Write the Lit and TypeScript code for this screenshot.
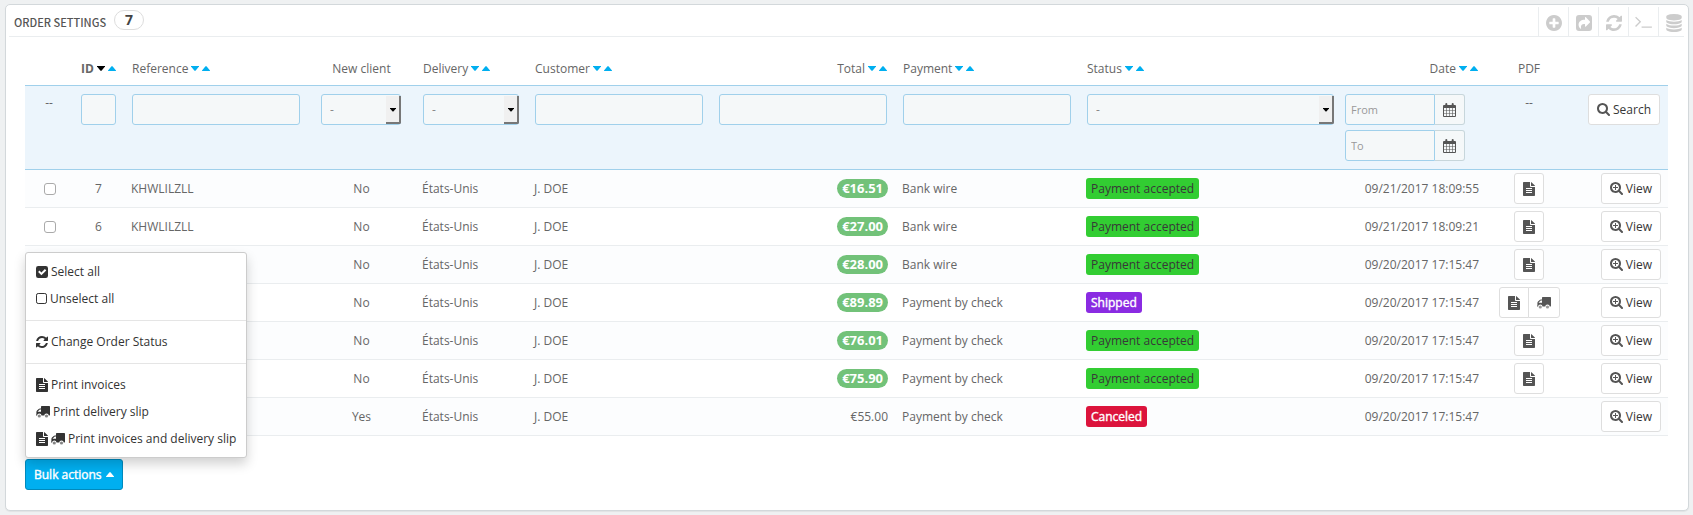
import { LitElement, html, svg, css, nothing } from "lit";
import { customElement, property } from "lit/decorators.js";

const SEARCH =
  "M1216 832q0-185-131.5-316.5t-316.5-131.5-316.5 131.5-131.5 316.5 131.5 316.5 316.5 131.5 316.5-131.5 131.5-316.5zm512 832q0 52-38 90t-90 38q-54 0-90-38l-343-342q-179 124-399 124-143 0-273.5-55.5t-225-150-150-225-55.5-273.5 55.5-273.5 150-225 225-150 273.5-55.5 273.5 55.5 225 150 150 225 55.5 273.5q0 220-124 399l343 343q37 37 37 90z";
const PLUS =
  "M1088 800v64q0 13-9.5 22.5t-22.5 9.5h-224v224q0 13-9.5 22.5t-22.5 9.5h-64q-13 0-22.5-9.5t-9.5-22.5v-224h-224q-13 0-22.5-9.5t-9.5-22.5v-64q0-13 9.5-22.5t22.5-9.5h224v-224q0-13 9.5-22.5t22.5-9.5h64q13 0 22.5 9.5t9.5 22.5v224h224q13 0 22.5 9.5t9.5 22.5z";
const REFRESH =
  "M1639 1056q0 5-1 7-64 268-268 434.5t-478 166.500q-146 0-282.500-55t-243.500-157l-129 129q-19 19-45 19t-45-19-19-45v-448q0-26 19-45t45-19h448q26 0 45 19t19 45-19 45l-137 137q71 66 161 102t187 36q134 0 250-65t186-179q11-17 53-117 8-23 30-23h192q13 0 22.500 9.500t9.500 22.500zm25-800v448q0 26-19 45t-45 19h-448q-26 0-45-19t-19-45 19-45l138-138q-148-137-349-137-134 0-250 65t-186 179q-11 17-53 117-8 23-30 23h-199q-13 0-22.500-9.500t-9.500-22.500v-7q65-268 270-434.500t480-166.500q146 0 284 55.500t245 156.500l130-129q19-19 45-19t45 19 19 45z";

interface Glyph {
  box: string;
  w: number;
  h: number;
  body: unknown;
}

const GLYPHS: Record<string, Glyph> = {
  add: {
    box: "128 128 1536 1536", w: 16, h: 16,
    body: svg`<path d="M1344 960v-128q0-26-19-45t-45-19h-256v-256q0-26-19-45t-45-19h-128q-26 0-45 19t-19 45v256h-256q-26 0-45 19t-19 45v128q0 26 19 45t45 19h256v256q0 26 19 45t45 19h128q26 0 45-19t19-45v-256h256q26 0 45-19t19-45zm320-64q0 209-103 385.5t-279.5 279.5-385.5 103-385.5-103-279.5-279.5-103-385.5 103-385.5 279.5-279.5 385.5-103 385.5 103 279.5 279.5 103 385.5z"/>`,
  },
  share: {
    box: "0 0 16 16", w: 16, h: 16,
    body: svg`<path fill-rule="evenodd" d="M3 0h10a3 3 0 0 1 3 3v10a3 3 0 0 1-3 3H3a3 3 0 0 1-3-3V3a3 3 0 0 1 3-3zM9 2.6v2.2C4.800 4.800 2.600 6.800 2.600 9.800c0 1.700.8 3 2 3.900.3.200.6 0 .5-.4C4.500 10.300 5.700 8.900 9 8.900v2.300c0 .5.500.7.900.4l4-4.200a.7.7 0 0 0 0-.9l-4-4.200C9.500 1.900 9 2.100 9 2.600z"/>`,
  },
  refresh: { box: "128 128 1536 1536", w: 16, h: 16, body: svg`<path d=${REFRESH} />` },
  sync: { box: "128 128 1536 1536", w: 12, h: 12, body: svg`<path d=${REFRESH} />` },
  terminal: {
    box: "64 384 1664 1280", w: 17, h: 13,
    body: svg`<path d="M649 983l-466 466q-10 10-23 10t-23-10l-50-50q-10-10-10-23t10-23l393-393-393-393q-10-10-10-23t10-23l50-50q10-10 23-10t23 10l466 466q10 10 10 23t-10 23zm1079 457v64q0 14-9 23t-23 9h-960q-14 0-23-9t-9-23v-64q0-14 9-23t23-9h960q14 0 23 9t9 23z"/>`,
  },
  database: {
    box: "128 0 1536 1792", w: 16, h: 18,
    body: svg`<path d="M896 768q237 0 443-43t325-127v170q0 69-103 128t-280 93.500-385 34.500-385-34.500-280-93.500-103-128v-170q119 84 325 127t443 43zm0 768q237 0 443-43t325-127v170q0 69-103 128t-280 93.500-385 34.500-385-34.500-280-93.500-103-128v-170q119 84 325 127t443 43zm0-384q237 0 443-43t325-127v170q0 69-103 128t-280 93.500-385 34.500-385-34.500-280-93.500-103-128v-170q119 84 325 127t443 43zm0-1152q208 0 385 34.500t280 93.500 103 128v128q0 69-103 128t-280 93.500-385 34.500-385-34.500-280-93.500-103-128v-128q0-69 103-128t280-93.500 385-34.500z"/>`,
  },
  search: { box: "64 128 1664 1664", w: 13, h: 13, body: svg`<path d=${SEARCH} />` },
  zoom: { box: "64 128 1664 1664", w: 13, h: 13, body: svg`<path d=${SEARCH} /><path d=${PLUS} />` },
  calendar: {
    box: "0 0 13 14", w: 13, h: 14,
    body: svg`<path fill-rule="evenodd" d="M1 2h1.300V1a1 1 0 0 1 2 0v1h4.400V1a1 1 0 0 1 2 0v1H12a1 1 0 0 1 1 1v10a1 1 0 0 1-1 1H1a1 1 0 0 1-1-1V3a1 1 0 0 1 1-1zM1 5v2h2.200V5zm2.800 0v2h2.400V5zm3 0v2h2.400V5zm3 0v2H12V5zM1 7.600v2.300h2.200V7.600zm2.800 0v2.300h2.400V7.600zm3 0v2.300h2.400V7.600zm3 0v2.300H12V7.600zM1 10.500V13h2.200v-2.500zm2.800 0V13h2.400v-2.500zm3 0V13h2.400v-2.500zm3 0V13H12v-2.500z"/>`,
  },
  file: {
    box: "0 0 12 14", w: 12, h: 14,
    body: svg`<path fill-rule="evenodd" d="M.7 0H7v4.300c0 .4.300.7.700.7H12v8.300a.7.700 0 0 1-.7.7H.7a.7.700 0 0 1-.7-.7V.7C0 .3.300 0 .7 0zM3 6v1h6V6zm0 2v1h6V8zm0 2v1h6v-1z"/><path d="M8 0c.3.100.5.200.7.400l2.900 2.900c.2.200.300.400.400.700H8z"/>`,
  },
  truck: {
    box: "0 0 14 12", w: 14, h: 12,
    body: svg`<path fill-rule="evenodd" d="M5.700 0h7.600c.4 0 .7.300.7.700v8c0 .6-.4.900-1 .9h-.3a2.200 2.200 0 0 0-4.400 0H5.500a2.200 2.200 0 0 0-4.400 0H.6c-.4 0-.6-.2-.6-.6 0-.3.100-.4.400-.5V6c0-.6.200-1 .6-1.400l1.700-1.700c.3-.3.700-.500 1.200-.5H5V.7c0-.4.300-.7.700-.7zM1.600 5.700H5V3.500H3.900c-.2 0-.3.100-.4.200L1.700 5.400z"/><circle cx="3.300" cy="10" r="1.600" opacity=".6"/><circle cx="10.500" cy="10" r="1.600" opacity=".6"/>`,
  },
  checked: {
    box: "0 0 12 12", w: 12, h: 12,
    body: svg`<path fill-rule="evenodd" d="M2.200 0h7.600A2.200 2.200 0 0 1 12 2.200v7.600A2.200 2.200 0 0 1 9.800 12H2.200A2.200 2.200 0 0 1 0 9.800V2.200A2.200 2.200 0 0 1 2.200 0zM5.400 9.300l4.900-4.900-1.400-1.400-3.500 3.500-1.900-1.900-1.400 1.400z"/>`,
  },
  unchecked: {
    box: "0 0 11 12", w: 11, h: 12,
    body: svg`<rect x=".5" y=".5" width="10" height="10" rx="1.700" fill="none" stroke="currentColor"/>`,
  },
  down: { box: "0 0 8 5", w: 8, h: 5, body: svg`<path d="M0 0h8v.6L4.500 4.700h-1L0 .6z"/>` },
  drop: { box: "0 0 6 4", w: 6, h: 4, body: svg`<path d="M0 0h6v.5L3.400 3.500h-.8L0 .5z"/>` },
  up: { box: "0 0 8 5", w: 8, h: 5, body: svg`<path d="M0 5h8v-.6L4.500.3h-1L0 4.400z"/>` },
};

@customElement("ui-icon")
export class UiIcon extends LitElement {
  @property() name = "";

  static styles = css`
    :host { display: inline-flex; flex: none; }
    svg { display: block; fill: currentColor; }
  `;

  render() {
    const g = GLYPHS[this.name];
    return g
      ? html`<svg viewBox=${g.box} width=${g.w} height=${g.h} aria-hidden="true">${g.body}</svg>`
      : nothing;
  }
}

interface Order {
  id?: number;
  ref?: string;
  fresh: string;
  total: string;
  paid: boolean;
  payment: string;
  status: "accepted" | "shipped" | "canceled";
  date: string;
  docs: string[];
}

const STATUS = { accepted: "Payment accepted", shipped: "Shipped", canceled: "Canceled" };

const ORDERS: Order[] = [
  { id: 7, ref: "KHWLILZLL", fresh: "No", total: "€16.51", paid: true, payment: "Bank wire", status: "accepted", date: "09/21/2017 18:09:55", docs: ["file"] },
  { id: 6, ref: "KHWLILZLL", fresh: "No", total: "€27.00", paid: true, payment: "Bank wire", status: "accepted", date: "09/21/2017 18:09:21", docs: ["file"] },
  { fresh: "No", total: "€28.00", paid: true, payment: "Bank wire", status: "accepted", date: "09/20/2017 17:15:47", docs: ["file"] },
  { fresh: "No", total: "€89.89", paid: true, payment: "Payment by check", status: "shipped", date: "09/20/2017 17:15:47", docs: ["file", "truck"] },
  { fresh: "No", total: "€76.01", paid: true, payment: "Payment by check", status: "accepted", date: "09/20/2017 17:15:47", docs: ["file"] },
  { fresh: "No", total: "€75.90", paid: true, payment: "Payment by check", status: "accepted", date: "09/20/2017 17:15:47", docs: ["file"] },
  { fresh: "Yes", total: "€55.00", paid: false, payment: "Payment by check", status: "canceled", date: "09/20/2017 17:15:47", docs: [] },
];

const COLUMNS = [
  { key: "pick", label: "", sort: false },
  { key: "id", label: "ID", sort: true },
  { key: "ref", label: "Reference", sort: true },
  { key: "new", label: "New client", sort: false },
  { key: "delivery", label: "Delivery", sort: true },
  { key: "customer", label: "Customer", sort: true },
  { key: "total", label: "Total", sort: true },
  { key: "payment", label: "Payment", sort: true },
  { key: "status", label: "Status", sort: true },
  { key: "date", label: "Date", sort: true },
  { key: "pdf", label: "PDF", sort: false },
  { key: "act", label: "", sort: false },
];

const TOOLS = [
  ["add", "Add new"],
  ["share", "Export"],
  ["refresh", "Refresh list"],
  ["terminal", "Show SQL query"],
  ["database", "Export to SQL Manager"],
];

const MENU: { icons: string[]; label: string }[][] = [
  [{ icons: ["checked"], label: "Select all" }, { icons: ["unchecked"], label: "Unselect all" }],
  [{ icons: ["sync"], label: "Change Order Status" }],
  [
    { icons: ["file"], label: "Print invoices" },
    { icons: ["truck"], label: "Print delivery slip" },
    { icons: ["file", "truck"], label: "Print invoices and delivery slip" },
  ],
];

@customElement("app-root")
export class AppRoot extends LitElement {
  static styles = css`
    :host {
      display: block;
      box-sizing: border-box;
      min-height: 100vh;
      padding: 4px 4px 4px 5px;
      background: #eff1f2;
      color: #666;
      font: 12px/17px "Open Sans", sans-serif;
    }
    *, *::before, *::after { box-sizing: border-box; }
    button, input, select { font: inherit; color: inherit; margin: 0; }
    button { cursor: pointer; }
    .panel {
      background: #fff;
      border: 1px solid #d3d8db;
      border-radius: 5px;
      box-shadow: 0 1px 1px rgba(0, 0, 0, 0.06);
      padding: 2px 4px 20px 3px;
    }
    .head {
      display: flex;
      align-items: center;
      height: 30px;
      border-bottom: 1px solid #eaedef;
      padding-left: 5px;
      color: #555;
    }
    h1 {
      margin: 0;
      font-family: "Ubuntu Condensed", "Noto Sans CJK SC", sans-serif;
      font-size: 11px;
      font-weight: 500;
      line-height: 20px;
    }
    .badge {
      margin: 0 0 3px 8px;
      width: 30px;
      height: 20px;
      border: 1px solid #ddd;
      border-radius: 10px;
      text-align: center;
      font-size: 14px;
      font-weight: 700;
      line-height: 18px;
      color: #444;
    }
    .tools { display: flex; align-self: stretch; margin-left: auto; }
    .tool {
      display: flex;
      align-items: center;
      justify-content: center;
      width: 30px;
      padding: 2px 0 0;
      border: 0;
      border-left: 1px solid #eaedef;
      background: none;
      color: #ccc;
    }
    .tool:last-child { width: 26px; padding-left: 4px; }
    .body { padding: 15px 16px 0; }
    table { width: 100%; table-layout: fixed; border-collapse: separate; border-spacing: 0; }
    th, td { padding: 0 8px; text-align: left; font-weight: 400; white-space: nowrap; }
    th { height: 34px; border-bottom: 1px solid #a0d0eb; }
    th.id, .amount { font-weight: 700; }
    .c-pick { width: 48px; }
    .c-id { width: 51px; }
    .c-ref, .c-customer, .c-total, .c-payment { width: 184px; }
    .c-new { width: 107px; }
    .c-delivery { width: 112px; }
    .c-status { width: 258px; }
    .c-date { width: 149px; }
    .c-pdf { width: 86px; }
    .c-act { width: 96px; }
    .pick, .new, .pdf, td.id { text-align: center; }
    .total, .date, .act { text-align: right; }
    .head-cell { display: inline-flex; align-items: center; gap: 3px; }
    .sort { display: inline-flex; padding: 0; border: 0; background: none; color: #00aff0; }
    .id .sort:nth-of-type(1) { color: #000; }
    .filters td {
      height: 84px;
      padding: 8px;
      vertical-align: top;
      background: #ecf5fc;
      border-bottom: 1px solid #a0d0eb;
    }
    .filters td.status { padding-right: 3px; }
    .filters td.new { padding-left: 13px; padding-right: 14px; }
    .field {
      display: block;
      width: 100%;
      height: 31px;
      padding: 0 8px;
      border: 1px solid #a0d0eb;
      border-radius: 3px;
      background: #f5f8f9;
      color: #888;
      appearance: none;
    }
    .field::placeholder { color: #999; opacity: 1; font-size: 11px; }
    .pick-one { display: block; position: relative; }
    .pick-one::before {
      content: "";
      position: absolute;
      top: 2px;
      right: 0;
      width: 15px;
      height: 28px;
      border: solid #777;
      border-width: 0 2px 2px 0;
      border-bottom-right-radius: 2px;
      background: #f0f0f0;
      pointer-events: none;
    }
    .pick-one ui-icon {
      position: absolute;
      top: 14px;
      right: 5px;
      color: #000;
      pointer-events: none;
    }
    .range { display: grid; gap: 5px; width: 120px; }
    .day { display: flex; }
    .day .field { flex: 1; min-width: 0; padding: 0 5px; border-radius: 3px 0 0 3px; }
    .cal {
      display: flex;
      align-items: center;
      justify-content: center;
      width: 30px;
      padding: 0;
      border: 1px solid #c7d6db;
      border-left: 0;
      border-radius: 0 3px 3px 0;
      background: #f5f8f9;
      color: #555;
    }
    .row td { height: 38px; padding: 0 7px; border-bottom: 1px solid #eaedef; }
    .row:nth-child(even) td { background: #fcfdfe; }
    .tick {
      display: inline-block;
      width: 12px;
      height: 12px;
      margin: 0 0 1px 2px;
      vertical-align: middle;
      appearance: none;
      border: 1px solid #aaa;
      border-radius: 3px;
      background: #fff;
    }
    .amount {
      display: inline-block;
      height: 19px;
      padding: 0 5px;
      border-radius: 10px;
      background: #72c279;
      color: #fff;
      font-size: 13px;
      line-height: 19px;
    }
    .tag { display: inline-block; padding: 0 5px; border-radius: 3px; line-height: 21px; }
    .accepted { background: #32cd32; color: #383838; }
    .shipped { background: #8a2be2; }
    .canceled { background: #dc143c; }
    .shipped, .canceled, .bulk-btn { color: #fff; -webkit-text-stroke: 0.4px #fff; }
    .btn {
      display: inline-flex;
      align-items: center;
      justify-content: center;
      gap: 3px;
      height: 31px;
      padding: 0 8px;
      border: 1px solid #dedede;
      border-radius: 3px;
      background: #fff;
      color: #363636;
      text-decoration: none;
      vertical-align: middle;
    }
    .btn ui-icon { color: #555; }
    .docs { display: inline-flex; vertical-align: middle; }
    .docs .btn + .btn { margin-left: -1px; border-radius: 0 3px 3px 0; }
    .docs .btn:first-child:not(:last-child) { border-radius: 3px 0 0 3px; }
    .bulk { position: relative; display: inline-block; margin-top: 23px; vertical-align: top; }
    .bulk-btn {
      display: flex;
      align-items: center;
      gap: 4px;
      height: 31px;
      padding: 0 8px;
      border: 1px solid #008abd;
      border-radius: 3px;
      background: #00aff0;
    }
    .menu {
      position: absolute;
      left: 0;
      bottom: calc(100% + 1px);
      margin: 0;
      padding: 5px 0;
      list-style: none;
      background: #fff;
      border: 1px solid #ccc;
      border-radius: 3px;
      box-shadow: 0 6px 12px rgba(0, 0, 0, 0.18);
    }
    .menu a {
      display: flex;
      align-items: center;
      gap: 3px;
      height: 27px;
      padding: 0 10px;
      color: #333;
      text-decoration: none;
      white-space: nowrap;
    }
    .rule { height: 1px; margin: 8px 0 7px; background: #e5e5e5; }
  `;

  private select(label: string) {
    return html`<span class="pick-one">
      <select class="field" aria-label=${label}><option>-</option></select>
      <ui-icon name="drop"></ui-icon>
    </span>`;
  }

  private day(label: string) {
    return html`<div class="day">
      <input class="field" type="text" placeholder=${label} aria-label=${label} />
      <button class="cal" type="button" aria-label="Open calendar"><ui-icon name="calendar"></ui-icon></button>
    </div>`;
  }

  private filter(key: string) {
    switch (key) {
      case "pick":
      case "pdf":
        return "--";
      case "new":
        return this.select("New client");
      case "delivery":
        return this.select("Delivery");
      case "status":
        return this.select("Status");
      case "date":
        return html`<div class="range">${this.day("From")}${this.day("To")}</div>`;
      case "act":
        return html`<button class="btn" type="button"><ui-icon name="search"></ui-icon>Search</button>`;
      default:
        return html`<input class="field" type="text" aria-label=${key} />`;
    }
  }

  private row(o: Order) {
    return html`<tr class="row">
      <td class="pick"><input class="tick" type="checkbox" aria-label="Select order" /></td>
      <td class="id">${o.id}</td>
      <td class="ref">${o.ref}</td>
      <td class="new">${o.fresh}</td>
      <td class="delivery">États-Unis</td>
      <td class="customer">J. DOE</td>
      <td class="total">${o.paid ? html`<span class="amount">${o.total}</span>` : o.total}</td>
      <td class="payment">${o.payment}</td>
      <td class="status"><span class="tag ${o.status}">${STATUS[o.status]}</span></td>
      <td class="date">${o.date}</td>
      <td class="pdf">
        <span class="docs">${o.docs.map(
          (d) => html`<a class="btn" href="#" aria-label=${d === "file" ? "Invoice" : "Delivery slip"}><ui-icon name=${d}></ui-icon></a>`
        )}</span>
      </td>
      <td class="act"><a class="btn" href="#"><ui-icon name="zoom"></ui-icon>View</a></td>
    </tr>`;
  }

  render() {
    return html`<section class="panel">
      <header class="head">
        <h1>ORDER SETTINGS</h1>
        <span class="badge">${ORDERS.length}</span>
        <div class="tools">
          ${TOOLS.map(
            ([icon, label]) => html`<button class="tool" type="button" aria-label=${label}><ui-icon name=${icon}></ui-icon></button>`
          )}
        </div>
      </header>
      <div class="body">
        <table>
          <colgroup>${COLUMNS.map((c) => html`<col class="c-${c.key}" />`)}</colgroup>
          <thead>
            <tr>
              ${COLUMNS.map(
                (c) => html`<th class=${c.key}>
                  <span class="head-cell">${c.label}${c.sort
                    ? html`<button class="sort" type="button" aria-label="Sort descending"><ui-icon name="down"></ui-icon></button>
                        <button class="sort" type="button" aria-label="Sort ascending"><ui-icon name="up"></ui-icon></button>`
                    : nothing}</span>
                </th>`
              )}
            </tr>
          </thead>
          <tbody>
            <tr class="filters">${COLUMNS.map((c) => html`<td class=${c.key}>${this.filter(c.key)}</td>`)}</tr>
            ${ORDERS.map((o) => this.row(o))}
          </tbody>
        </table>
        <div class="bulk">
          <button class="bulk-btn" type="button" aria-expanded="true">Bulk actions<ui-icon name="up"></ui-icon></button>
          <ul class="menu">
            ${MENU.map(
              (group, i) => html`${i ? html`<li class="rule" role="separator"></li>` : nothing}${group.map(
                (m) => html`<li><a href="#">${m.icons.map((n) => html`<ui-icon name=${n}></ui-icon>`)}${m.label}</a></li>`
              )}`
            )}
          </ul>
        </div>
      </div>
    </section>`;
  }
}
